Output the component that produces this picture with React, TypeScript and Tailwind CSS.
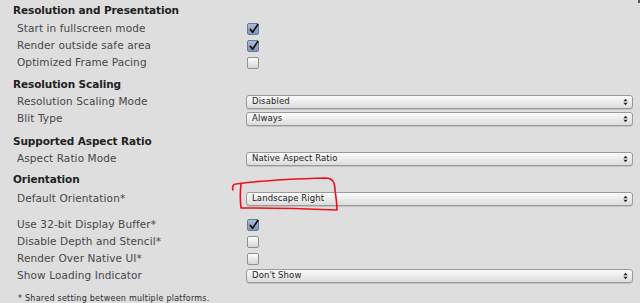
import React from "react";

type Row =
  | { kind: "check"; label: string; checked: boolean }
  | { kind: "select"; label: string; value: string };

function Checkbox({ checked }: { checked: boolean }) {
  return (
    <div
      className={
        checked
          ? "relative w-[12px] h-[12px] rounded-[2px] border border-[#6b7a90] bg-gradient-to-b from-[#a9bcda] to-[#7d96bd]"
          : "relative w-[12px] h-[12px] rounded-[2px] border border-[#8f8f8f] bg-gradient-to-b from-[#fdfdfd] to-[#d6d6d6]"
      }
    >
      {checked && (
        <svg viewBox="0 0 12 12" className="absolute left-[0px] top-[-1px] w-[12px] h-[12px]">
          <path d="M2.3 6.4 L4.6 9.2 L9.8 1.6" fill="none" stroke="#111" strokeWidth="1.7" strokeLinecap="round" strokeLinejoin="round" />
        </svg>
      )}
    </div>
  );
}

function Select({ value }: { value: string }) {
  return (
    <div className="flex items-center justify-between w-[387px] h-[14px] rounded-[3px] border border-[#9a9a9a] bg-gradient-to-b from-[#fbfbfb] to-[#dcdcdc] pl-[5px] pr-[4px] shadow-[0_1px_0_rgba(0,0,0,0.12)]">
      <span className="text-[8.5px] leading-none text-[#1e1e1e] tracking-[0.1px]">{value}</span>
      <svg viewBox="0 0 6 9" className="w-[5px] h-[8px]">
        <path d="M0.5 3.6 L3 0.6 L5.5 3.6 Z" fill="#222" />
        <path d="M0.5 5.4 L3 8.4 L5.5 5.4 Z" fill="#222" />
      </svg>
    </div>
  );
}

function SettingRow({ row }: { row: Row }) {
  return (
    <div className="flex items-center h-[17px]">
      <div className="w-[247px] pl-[17px] text-[10.5px] leading-none text-[#474747] tracking-[0.1px]">{row.label}</div>
      {row.kind === "check" ? <Checkbox checked={row.checked} /> : <div className="-ml-[1px]"><Select value={row.value} /></div>}
    </div>
  );
}

function Heading({ title, className }: { title: string; className?: string }) {
  return (
    <div className={"flex items-center h-[18px] pl-[13px] text-[10.5px] font-bold leading-none text-[#222] tracking-[-0.1px] " + (className ?? "")}>
      {title}
    </div>
  );
}

export default function App() {
  return (
    <div className="relative w-[640px] h-[303px] overflow-hidden bg-[#dedede] font-['DejaVu_Sans',sans-serif]">
      <div className="flex flex-col pt-[1px]">
        <Heading title="Resolution and Presentation" />
        <div className="mt-[1px]">
          <SettingRow row={{ kind: "check", label: "Start in fullscreen mode", checked: true }} />
          <SettingRow row={{ kind: "check", label: "Render outside safe area", checked: true }} />
          <SettingRow row={{ kind: "check", label: "Optimized Frame Pacing", checked: false }} />
        </div>

        <Heading title="Resolution Scaling" className="mt-[4px]" />
        <SettingRow row={{ kind: "select", label: "Resolution Scaling Mode", value: "Disabled" }} />
        <SettingRow row={{ kind: "select", label: "Blit Type", value: "Always" }} />

        <Heading title="Supported Aspect Ratio" className="mt-[5px]" />
        <SettingRow row={{ kind: "select", label: "Aspect Ratio Mode", value: "Native Aspect Ratio" }} />

        <Heading title="Orientation" className="mt-[3px]" />
        <div className="mt-[2px]">
          <SettingRow row={{ kind: "select", label: "Default Orientation*", value: "Landscape Right" }} />
        </div>

        <div className="mt-[9px]">
          <SettingRow row={{ kind: "check", label: "Use 32-bit Display Buffer*", checked: true }} />
          <SettingRow row={{ kind: "check", label: "Disable Depth and Stencil*", checked: false }} />
          <SettingRow row={{ kind: "check", label: "Render Over Native UI*", checked: false }} />
          <SettingRow row={{ kind: "select", label: "Show Loading Indicator", value: "Don't Show" }} />
        </div>

        <div className="mt-[11px] pl-[18px] text-[8px] leading-none text-[#2a2a2a] tracking-[0.25px]">
          * Shared setting between multiple platforms.
        </div>
      </div>

      {/* red hand-drawn annotation */}
      <svg className="absolute left-0 top-0 pointer-events-none" width="640" height="303" viewBox="0 0 640 303">
        <path
          d="M233 190 C232 187 233 184 236 184 C250 182 290 179 326 178 C333 178 335 183 335 190 C336 197 337 204 337 210 C310 209 270 208 241 208 C240 200 240 193 241 184"
          fill="none"
          stroke="#e8131b"
          strokeWidth="1.6"
          strokeLinecap="round"
          strokeLinejoin="round"
        />
      </svg>
      <div className="absolute right-0 top-0 w-[2px] h-[3px] bg-[#555]" />
    </div>
  );
}
